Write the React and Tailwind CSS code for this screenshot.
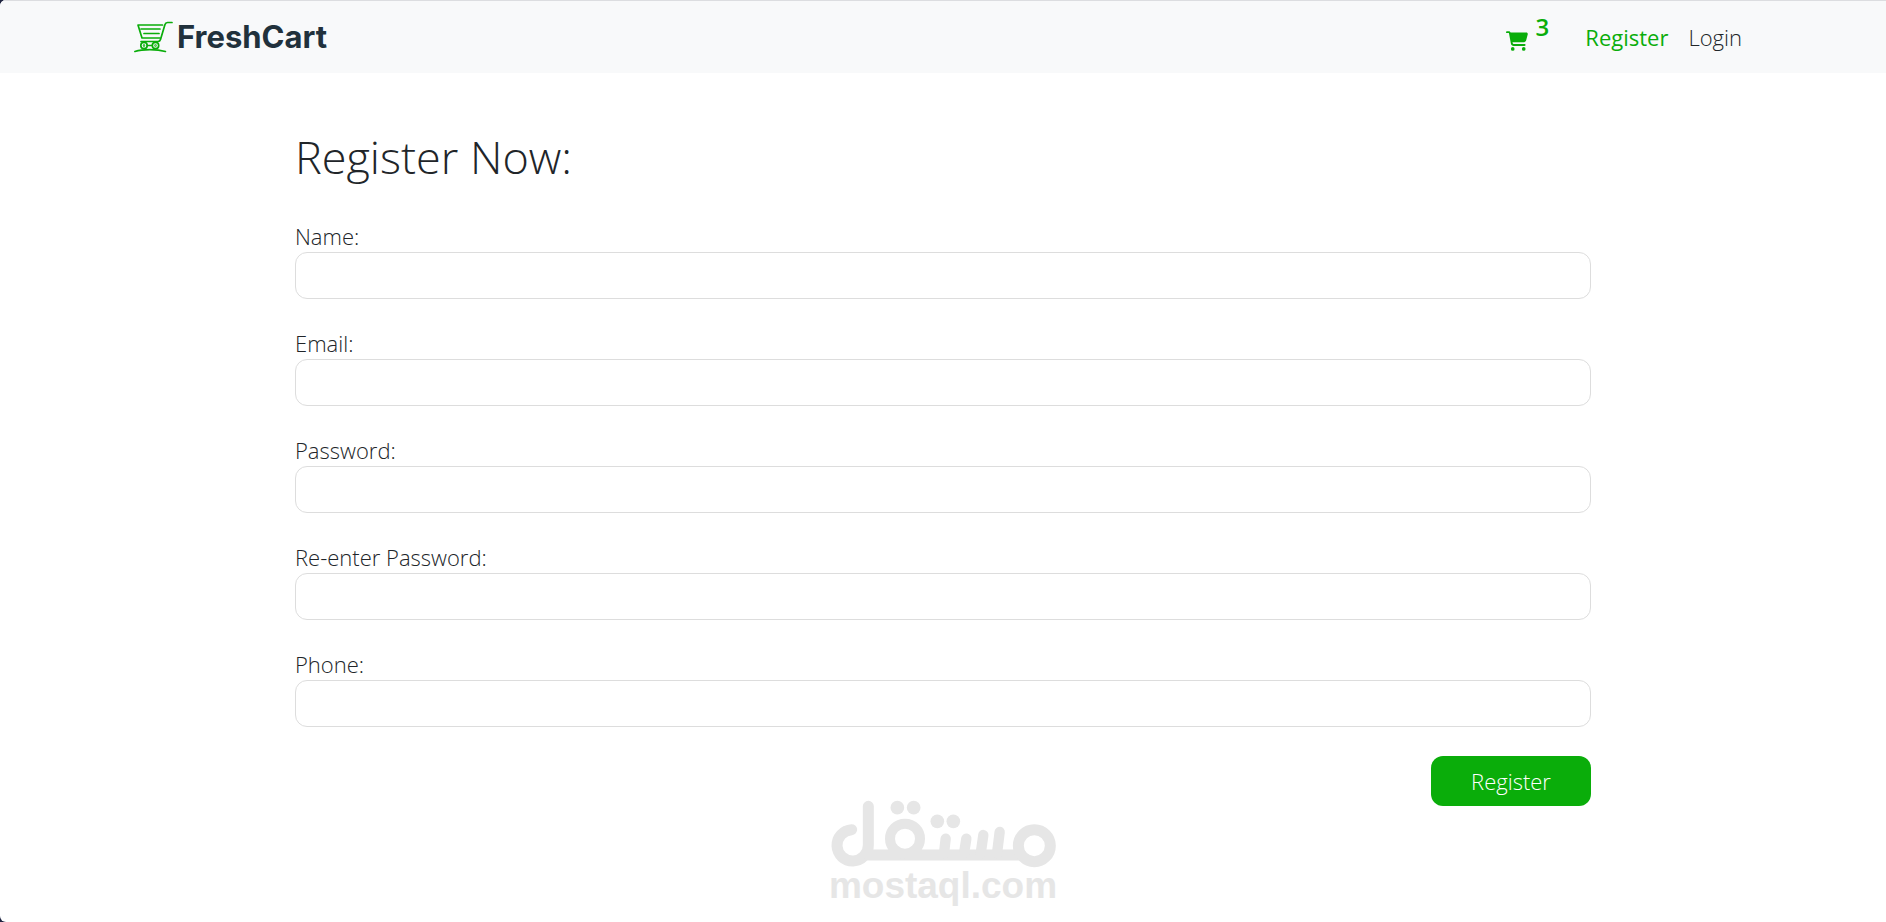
import React from "react";
import { FaCartShopping } from "react-icons/fa6";

const fields = [
  { id: "name", label: "Name:", type: "text" },
  { id: "email", label: "Email:", type: "email" },
  { id: "password", label: "Password:", type: "password" },
  { id: "rePassword", label: "Re-enter Password:", type: "password" },
  { id: "phone", label: "Phone:", type: "tel" },
];

function CartLogo() {
  return (
    <svg viewBox="0 0 39 32" className="h-8 w-[39px]" fill="none" stroke="#0aad0a" strokeWidth="1.7" strokeLinecap="round" strokeLinejoin="round" aria-hidden="true">
      <path d="M38 1.500h-4.500c-1.500 0-2.200.8-2.600 2.200L26.500 18.500c-.4 1.500-1.200 2-2.600 2H7" />
      <path d="M28.500 4H4l4 13h18" />
      <path d="M7 8h19M10 12.500h15" />
      <circle cx="10" cy="24.500" r="3.200" />
      <circle cx="21.500" cy="24.500" r="3.200" />
      <circle cx="10" cy="24.500" r="0.4" />
      <circle cx="21.500" cy="24.500" r="0.4" />
      <path d="M13.500 24.500h4.500M.9 30.500c8-2.600 22-2.600 30.500 0" />
    </svg>
  );
}

function Watermark() {
  return (
    <div className="pointer-events-none absolute inset-x-0 bottom-[18px] flex flex-col items-center text-[#e6e6e6]">
      <svg viewBox="90 58 681 204" className="h-[68px] w-[227px]" fill="none" stroke="currentColor" strokeLinecap="round" role="img" aria-label="مستقل">
        <path d="M155 147A47 47 0 1 0 205 193V77" strokeWidth="33" />
        <path d="M205 223H655" strokeWidth="33" />
        <circle cx="315" cy="174" r="45" strokeWidth="30" />
        <circle cx="703" cy="195" r="48" strokeWidth="33" />
        <path d="M437 174l-5 45M499 174l-7 45M550 163l-8 56M599 154l-8 65" strokeWidth="31" />
        <g fill="currentColor" stroke="none">
          <circle cx="292" cy="81" r="20.500" />
          <circle cx="341" cy="81" r="20.500" />
          <circle cx="412" cy="122" r="20.500" />
          <circle cx="460" cy="122" r="20.500" />
        </g>
      </svg>
      <span className="font-['Liberation_Sans',sans-serif] text-[37px] leading-9 font-bold">mostaql.com</span>
    </div>
  );
}

export default function App() {
  return (
    <div className="bg-[#1f2440] font-['Open_Sans','Noto_Sans',sans-serif] text-[22px] font-light text-[#212529]">
      <div className="relative flex min-h-screen flex-col overflow-hidden rounded-l-md bg-white">
        <header className="border-t border-[#dcdde0] bg-[#f8f9fa]">
          <nav className="flex h-18 items-center justify-between pr-36 pl-[134px]">
            <a href="#home" className="flex items-center gap-1 text-[#21313c]">
              <CartLogo />
              <span className="font-['Inter',sans-serif] text-[31px] leading-10 font-bold">FreshCart</span>
            </a>
            <div className="flex items-center gap-5">
              <a href="#cart" aria-label="Cart, 3 items" className="mr-4 flex items-center gap-2 text-[#0aad0a]">
                <FaCartShopping className="mt-2 size-[22px]" />
                <span className="mb-5 text-2xl leading-6 font-semibold">3</span>
              </a>
              <a href="#register" className="font-medium text-[#0aad0a]">Register</a>
              <a href="#login">Login</a>
            </div>
          </nav>
        </header>
        <main className="mx-auto w-full max-w-[1320px] px-3 pt-[60px] pb-28">
          <h1 className="mb-10 text-[45px] leading-12">Register Now:</h1>
          <form>
            {fields.map((f) => (
              <div key={f.id} className="mb-[29px]">
                <label htmlFor={f.id} className="mb-px block leading-[30px]">{f.label}</label>
                <input id={f.id} name={f.id} type={f.type} className="block h-[47px] w-full rounded-xl border border-[#dddddd] bg-white px-3 outline-none focus:border-[#0aad0a]" />
              </div>
            ))}
            <button type="button" className="ml-auto block h-[50px] w-40 rounded-xl bg-[#0aad0a] text-white">Register</button>
          </form>
        </main>
        <Watermark />
      </div>
    </div>
  );
}
